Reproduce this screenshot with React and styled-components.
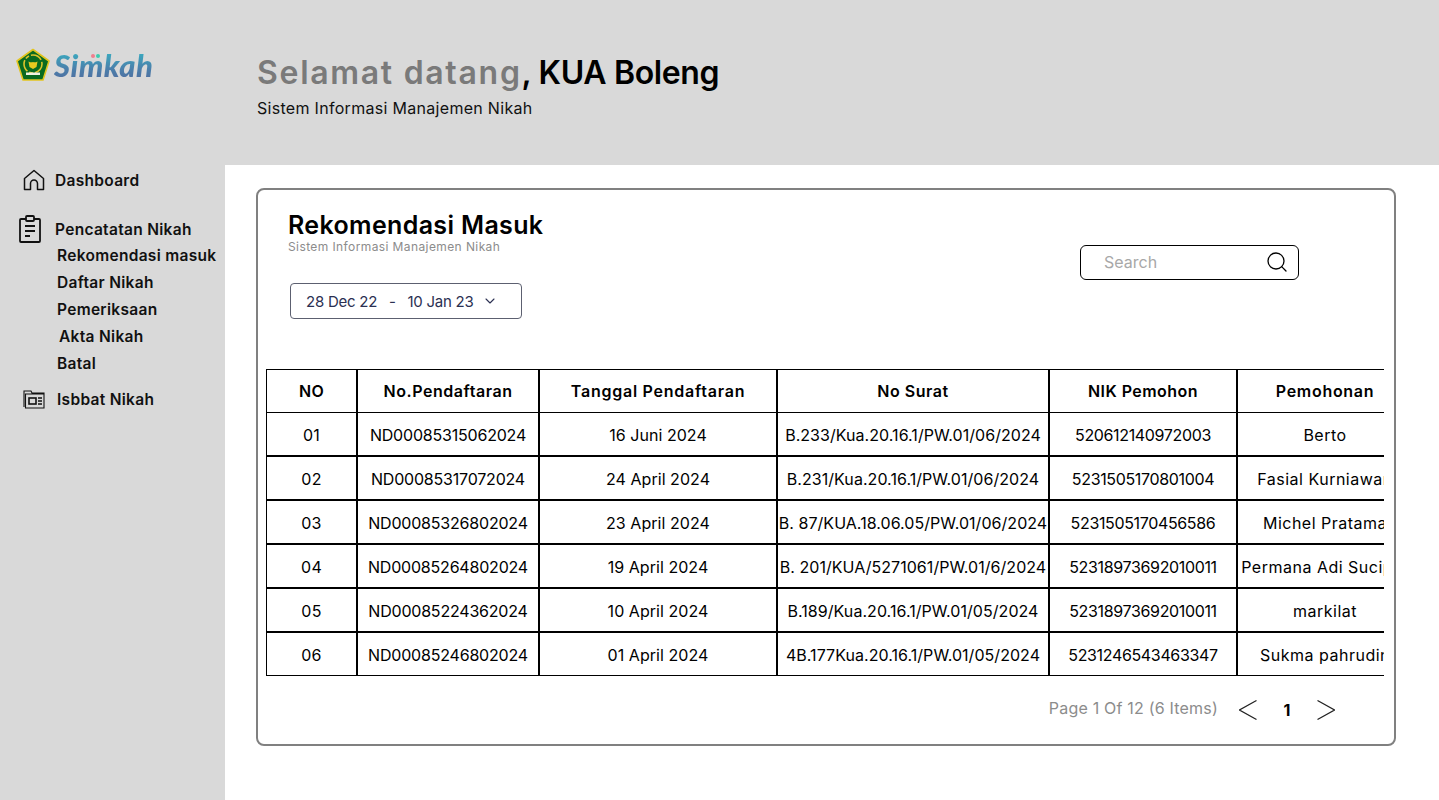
import styled, { createGlobalStyle } from "styled-components";
import { ChevronDown, Search } from "lucide-react";

const GlobalStyle = createGlobalStyle`
  html, body {
    margin: 0;
    padding: 0;
    background: #fff;
  }
  * {
    box-sizing: border-box;
  }
  body {
    font-family: Inter, "Liberation Sans", sans-serif;
    color: #000;
  }
`;

const Page = styled.div`
  display: grid;
  grid-template-columns: 225px 1fr;
  grid-template-rows: 165px 635px;
  width: 1439px;
  height: 800px;
  overflow: hidden;
`;

const Header = styled.header`
  grid-column: 1 / 3;
  display: flex;
  background: #d9d9d9;
`;

const LogoBox = styled.div`
  display: flex;
  align-items: center;
  gap: 4px;
  width: 257px;
  height: 44px;
  margin-top: 43px;
  padding-left: 16px;
`;

const LogoText = styled.span`
  position: relative;
  font-family: "Lato", sans-serif;
  font-style: italic;
  font-weight: 900;
  font-size: 31px;
  line-height: 40px;
  letter-spacing: 0.4px;
  background: linear-gradient(180deg, #36b4c4 10%, #4b7fab 60%, #51689b 100%);
  -webkit-background-clip: text;
  background-clip: text;
  color: transparent;

  &::after {
    content: "";
    position: absolute;
    top: 9px;
    left: 37px;
    width: 4px;
    height: 4px;
    border-radius: 50%;
    background: #ef7f8e;
    box-shadow: 5px 0 0 #3ccbb0;
  }
`;

const Greeting = styled.div`
  padding-top: 51px;
`;

const Title = styled.h1`
  margin: 0;
  font-size: 32px;
  line-height: 44px;
  font-weight: 600;
  letter-spacing: -0.35px;
  color: #000;
`;

const Muted = styled.span`
  letter-spacing: 1.7px;
  color: #7a7a7a;
`;

const Subtitle = styled.p`
  margin: 2px 0 0;
  font-size: 16px;
  line-height: 22px;
  letter-spacing: 0.3px;
  color: #111;
`;

const Sidebar = styled.nav`
  display: flex;
  flex-direction: column;
  background: #d9d9d9;
  padding-top: 2px;
`;

const NavRow = styled.div`
  display: flex;
  align-items: center;
  height: 26px;
  margin-top: ${(p) => p.$top || 0}px;
  padding-left: ${(p) => p.$left}px;
  gap: ${(p) => p.$gap}px;
  font-size: 15.5px;
  font-weight: 600;
  letter-spacing: 0.3px;
  color: #111;
`;

const SubList = styled.div`
  display: flex;
  flex-direction: column;
  padding-left: 57px;
`;

const SubItem = styled.div`
  height: 27px;
  line-height: 27px;
  font-size: 15.5px;
  font-weight: 600;
  letter-spacing: 0.3px;
  color: #111;
  padding-left: ${(p) => p.$nudge || 0}px;
`;

const Main = styled.main`
  background: #fff;
  padding: 23px 43px 0 31px;
`;

const Card = styled.section`
  display: flex;
  flex-direction: column;
  height: 558px;
  padding: 0 10px 0 8px;
  border: 2px solid #808080;
  border-radius: 8px;
`;

const CardTop = styled.div`
  display: flex;
  justify-content: space-between;
  height: 179px;
  padding: 20px 85px 0 22px;
`;

const CardTitle = styled.h2`
  margin: 0;
  font-size: 25px;
  line-height: 30px;
  font-weight: 600;
  letter-spacing: 0.35px;
`;

const CardSub = styled.p`
  margin: 0;
  font-size: 12px;
  line-height: 14px;
  color: #8c8c8c;
  letter-spacing: 0.4px;
`;

const DatePicker = styled.div`
  display: flex;
  align-items: center;
  width: 232px;
  height: 36px;
  margin: 29px 0 0 2px;
  padding-left: 15px;
  border: 1px solid #5c6070;
  border-radius: 4px;
  font-size: 15px;
  letter-spacing: -0.25px;
  color: #2b3052;
  white-space: pre;
`;

const DateArrow = styled(ChevronDown)`
  margin-left: 8px;
`;

const SearchBox = styled.div`
  display: flex;
  align-items: center;
  justify-content: space-between;
  width: 219px;
  height: 35px;
  margin-top: 35px;
  padding: 0 9px 2px 23px;
  border: 1px solid #000;
  border-radius: 6px;
  font-size: 16px;
  color: #a8a8a8;
`;

const TableClip = styled.div`
  width: 1118px;
  overflow: hidden;
`;

const Table = styled.table`
  width: 1300px;
  border-collapse: separate;
  border-spacing: 0;
  border-top: 1px solid #000;
  border-left: 1px solid #000;
  table-layout: fixed;
`;

const Cell = styled.td`
  height: 44px;
  padding: 2px 0 0;
  border-right: 2px solid #000;
  border-bottom: 2px solid #000;
  text-align: center;
  white-space: nowrap;
  overflow: hidden;
  font-size: 16px;
  letter-spacing: ${(p) => p.$spacing}px;
  color: #000;

  tr:last-child > & {
    height: 43px;
    border-bottom-width: 1px;
  }
`;

const HeadCell = styled(Cell).attrs({ as: "th" })`
  padding: 0;
  font-weight: 600;
`;

const Pager = styled.div`
  display: flex;
  align-items: center;
  justify-content: flex-end;
  height: 67px;
  padding-right: 49px;
`;

const PageInfo = styled.span`
  margin-right: 21px;
  padding-bottom: 3px;
  font-size: 16px;
  letter-spacing: 0.2px;
  color: #8c8c8c;
`;

const PageNumber = styled.span`
  width: 60px;
  text-align: center;
  font-size: 16px;
  font-weight: 700;
`;

const columns = [
  { label: "NO", width: 91, spacing: 0.3, headSpacing: 0.4 },
  { label: "No.Pendaftaran", width: 182, spacing: -0.2, headSpacing: 0.55 },
  { label: "Tanggal Pendaftaran", width: 238, spacing: 0.05, headSpacing: 0.75 },
  { label: "No Surat", width: 272, spacing: 0.05, headSpacing: 0.55 },
  { label: "NIK Pemohon", width: 188, spacing: -0.35, headSpacing: 0.45 },
  { label: "Pemohonan", width: 176, spacing: 0.5, headSpacing: 0.7 },
  { label: "", width: 152, spacing: 0, headSpacing: 0 },
];

const rows = [
  ["01", "ND00085315062024", "16 Juni 2024", "B.233/Kua.20.16.1/PW.01/06/2024", "520612140972003", "Berto"],
  ["02", "ND00085317072024", "24 April 2024", "B.231/Kua.20.16.1/PW.01/06/2024", "5231505170801004", "Fasial Kurniawan"],
  ["03", "ND00085326802024", "23 April 2024", "B. 87/KUA.18.06.05/PW.01/06/2024", "5231505170456586", "Michel Pratama"],
  ["04", "ND00085264802024", "19 April 2024", "B. 201/KUA/5271061/PW.01/6/2024", "52318973692010011", "Permana Adi Sucipto"],
  ["05", "ND00085224362024", "10 April 2024", "B.189/Kua.20.16.1/PW.01/05/2024", "52318973692010011", "markilat"],
  ["06", "ND00085246802024", "01 April 2024", "4B.177Kua.20.16.1/PW.01/05/2024", "5231246543463347", "Sukma pahrudin"],
];

const Emblem = () => (
  <svg width="34" height="34" viewBox="0 0 34 34">
    <path d="M17 1.5 33 13 27 32H7L1 13Z" fill="#0a6a20" stroke="#e3c51e" strokeWidth="1.6" strokeLinejoin="round" />
    <circle cx="17" cy="16" r="9" fill="none" stroke="#dcc32a" strokeWidth="1.6" strokeDasharray="12 2 4 2" />
    <path d="M12.5 13.5c2 1 3.5 1 4.5.5 1 .5 2.5.5 4.5-.5l-1 5.5-3.5 2-3.5-2Z" fill="#e8c91f" />
    <path d="M10 24.5h14v2.5H10Z" fill="#f2f2e0" />
  </svg>
);

const HomeIcon = () => (
  <svg width="22" height="22" viewBox="0 0 22 22" fill="none" stroke="#111" strokeWidth="1.5" strokeLinejoin="round">
    <path d="M1.5 9.5 11 1.5l9.5 8v11h-6v-6a3.5 3.5 0 0 0-7 0v6h-6Z" />
  </svg>
);

const ClipboardIcon = () => (
  <svg width="22" height="28" viewBox="0 0 22 28" fill="none" stroke="#111" strokeWidth="1.8" strokeLinejoin="round">
    <path d="M7 4H2a1 1 0 0 0-1 1v21a1 1 0 0 0 1 1h18a1 1 0 0 0 1-1V5a1 1 0 0 0-1-1h-5" />
    <rect x="7" y="1" width="8" height="5" rx="1" />
    <path d="M6 11h10M6 16h10M6 21h5" />
  </svg>
);

const FolderIcon = () => (
  <svg width="22" height="20" viewBox="0 0 22 20" fill="none" stroke="#111" strokeWidth="1.1">
    <path d="M1 18V2h7l1 2h12v1H2.5v14H21V5" />
    <rect x="6" y="9" width="7" height="6" strokeWidth="1.6" />
    <path d="M15 9h4M15 12h4M15 15h4" strokeWidth="1.3" />
  </svg>
);

const PagerArrow = ({ flip }) => (
  <svg width="18" height="20" viewBox="0 0 18 20" fill="none" stroke="#222" strokeWidth="1.2">
    <path d={flip ? "M.5.5 17.5 10 .5 19.5" : "M17.5.5.5 10 17.5 19.5"} />
  </svg>
);

export default function App() {
  return (
    <Page>
      <GlobalStyle />
      <Header>
        <LogoBox>
          <Emblem />
          <LogoText>Simkah</LogoText>
        </LogoBox>
        <Greeting>
          <Title>
            <Muted>Selamat datang</Muted>, KUA Boleng
          </Title>
          <Subtitle>Sistem Informasi Manajemen Nikah</Subtitle>
        </Greeting>
      </Header>
      <Sidebar>
        <NavRow $left={23} $gap={10}>
          <HomeIcon />
          Dashboard
        </NavRow>
        <NavRow $left={19} $gap={14} $top={23}>
          <ClipboardIcon />
          Pencatatan Nikah
        </NavRow>
        <SubList>
          <SubItem>Rekomendasi masuk</SubItem>
          <SubItem>Daftar Nikah</SubItem>
          <SubItem>Pemeriksaan</SubItem>
          <SubItem $nudge={2}>Akta Nikah</SubItem>
          <SubItem>Batal</SubItem>
        </SubList>
        <NavRow $left={23} $gap={12} $top={9}>
          <FolderIcon />
          Isbbat Nikah
        </NavRow>
      </Sidebar>
      <Main>
        <Card>
          <CardTop>
            <div>
              <CardTitle>Rekomendasi Masuk</CardTitle>
              <CardSub>Sistem Informasi Manajemen Nikah</CardSub>
              <DatePicker>
                {"28 Dec 22   -   10 Jan 23"}
                <DateArrow size={16} strokeWidth={1.6} />
              </DatePicker>
            </div>
            <SearchBox>
              Search
              <Search size={24} color="#000" strokeWidth={1.3} />
            </SearchBox>
          </CardTop>
          <TableClip>
            <Table>
              <colgroup>
                {columns.map((c, i) => (
                  <col key={i} style={{ width: c.width }} />
                ))}
              </colgroup>
              <thead>
                <tr>
                  {columns.map((c, i) => (
                    <HeadCell key={i} $spacing={c.headSpacing}>
                      {c.label}
                    </HeadCell>
                  ))}
                </tr>
              </thead>
              <tbody>
                {rows.map((row) => (
                  <tr key={row[0]}>
                    {row.map((v, i) => (
                      <Cell key={i} $spacing={columns[i].spacing}>
                        {v}
                      </Cell>
                    ))}
                    <Cell $spacing={0} />
                  </tr>
                ))}
              </tbody>
            </Table>
          </TableClip>
          <Pager>
            <PageInfo>Page 1 Of 12 (6 Items)</PageInfo>
            <PagerArrow />
            <PageNumber>1</PageNumber>
            <PagerArrow flip />
          </Pager>
        </Card>
      </Main>
    </Page>
  );
}
